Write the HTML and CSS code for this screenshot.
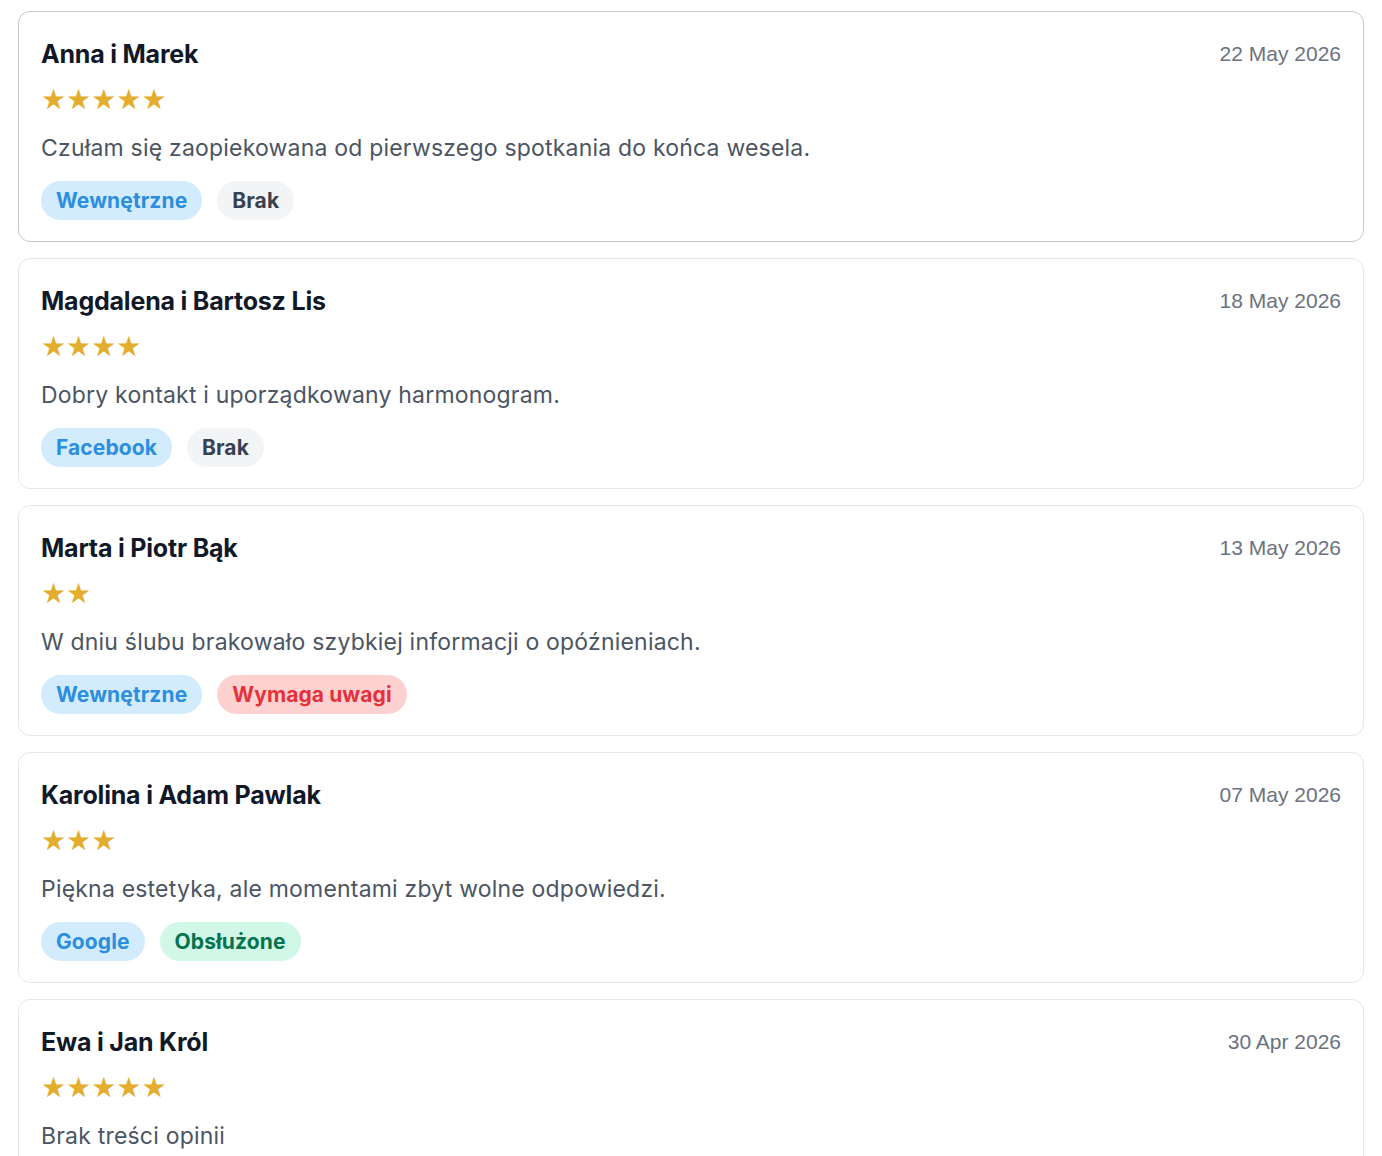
FILE: index.html
```html
<!DOCTYPE html>
<html lang="pl">
<head>
  <meta charset="UTF-8">
  <meta name="viewport" content="width=device-width, initial-scale=1.0">
  <title>Opinie</title>
  <link rel="stylesheet" href="styles.css">
</head>
<body>
  <div class="reviews">
    <div class="review review-active">
      <div class="review-head">
        <h3 class="review-name">Anna i Marek</h3>
        <span class="review-date">22 May 2026</span>
      </div>
      <div class="stars">★★★★★</div>
      <p class="review-text">Czułam się zaopiekowana od pierwszego spotkania do końca wesela.</p>
      <div class="tags">
        <span class="tag tag-source">Wewnętrzne</span>
        <span class="tag tag-none">Brak</span>
      </div>
    </div>

    <div class="review">
      <div class="review-head">
        <h3 class="review-name">Magdalena i Bartosz Lis</h3>
        <span class="review-date">18 May 2026</span>
      </div>
      <div class="stars">★★★★</div>
      <p class="review-text">Dobry kontakt i uporządkowany harmonogram.</p>
      <div class="tags">
        <span class="tag tag-source">Facebook</span>
        <span class="tag tag-none">Brak</span>
      </div>
    </div>

    <div class="review">
      <div class="review-head">
        <h3 class="review-name">Marta i Piotr Bąk</h3>
        <span class="review-date">13 May 2026</span>
      </div>
      <div class="stars">★★</div>
      <p class="review-text">W dniu ślubu brakowało szybkiej informacji o opóźnieniach.</p>
      <div class="tags">
        <span class="tag tag-source">Wewnętrzne</span>
        <span class="tag tag-alert">Wymaga uwagi</span>
      </div>
    </div>

    <div class="review">
      <div class="review-head">
        <h3 class="review-name">Karolina i Adam Pawlak</h3>
        <span class="review-date">07 May 2026</span>
      </div>
      <div class="stars">★★★</div>
      <p class="review-text">Piękna estetyka, ale momentami zbyt wolne odpowiedzi.</p>
      <div class="tags">
        <span class="tag tag-source">Google</span>
        <span class="tag tag-done">Obsłużone</span>
      </div>
    </div>

    <div class="review">
      <div class="review-head">
        <h3 class="review-name">Ewa i Jan Król</h3>
        <span class="review-date">30 Apr 2026</span>
      </div>
      <div class="stars">★★★★★</div>
      <p class="review-text">Brak treści opinii</p>
      <div class="tags">
        <span class="tag tag-source">Google</span>
        <span class="tag tag-none">Brak</span>
      </div>
    </div>
  </div>
</body>
</html>
```

FILE: styles.css
```css
* {
  margin: 0;
  padding: 0;
  box-sizing: border-box;
}

body {
  font-family: 'Inter', sans-serif;
  background-color: #fff;
  color: #111827;
  padding: 11px 18px;
}

.reviews {
  display: flex;
  flex-direction: column;
  gap: 16px;
}

.review {
  border: 1px solid #e5e7eb;
  border-radius: 12px;
  padding: 22px 22px 21px;
  background-color: #fff;
}

.review-active {
  border-color: #c5c9d1;
}

.review-head {
  display: flex;
  justify-content: space-between;
  align-items: center;
}

.review-name {
  font-size: 25px;
  font-weight: 700;
  line-height: 40px;
  color: #111827;
  letter-spacing: -0.2px;
}

.review-date {
  font-family: 'Liberation Sans', Arial, sans-serif;
  font-size: 21px;
  line-height: 24px;
  color: #6b7280;
}

.stars {
  margin-top: 12px;
  font-family: 'DejaVu Sans', sans-serif;
  font-size: 28px;
  line-height: 28px;
  color: #e3ad2e;
}

.review-text {
  margin-top: 18px;
  font-size: 23px;
  line-height: 32px;
  color: #4b5563;
  letter-spacing: 0.2px;
}

.tags {
  margin-top: 17px;
  display: flex;
  gap: 15px;
}

.tag {
  display: inline-block;
  padding: 0 15px;
  height: 39px;
  line-height: 39px;
  border-radius: 999px;
  font-size: 21px;
  font-weight: 700;
  letter-spacing: 0.1px;
}

.tag-source {
  background-color: #d2ebfd;
  color: #2b8ede;
}

.tag-none {
  background-color: #f3f4f6;
  color: #374151;
}

.tag-alert {
  background-color: #fed1d1;
  color: #e5323a;
}

.tag-done {
  background-color: #d1f8e6;
  color: #05734f;
}
```
